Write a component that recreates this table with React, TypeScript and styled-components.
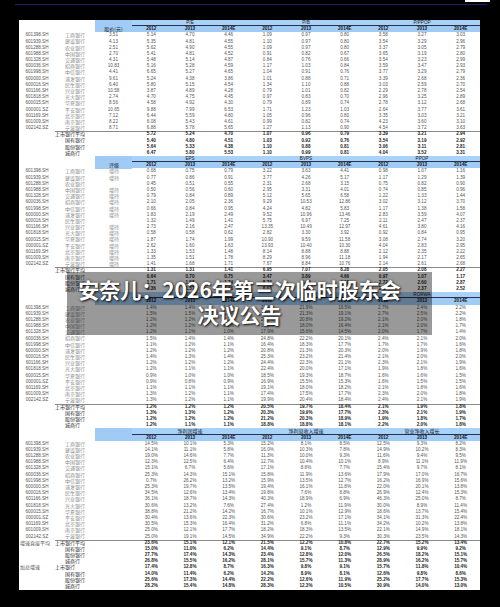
import React from 'react';
import styled, { createGlobalStyle } from 'styled-components';

const GlobalStyle = createGlobalStyle`
  html, body { margin: 0; padding: 0; background: #000; }
  body { font-family: "Liberation Sans", Arial, sans-serif; }
`;

type StockRow = { code: string; name: string; extra: string; vals: string[] };
type AvgRow = { pre?: string; label: string; indent: boolean; vals: string[] };
type Section = { priceLabel: string; groups: string[]; rows: StockRow[]; avgs: AvgRow[]; cnGroups?: boolean };

const codes = [
  ['601398.SH', '工商银行'], ['601939.SH', '建设银行'], ['601288.SH', '农业银行'], ['601988.SH', '中国银行'],
  ['601328.SH', '交通银行'], ['600036.SH', '招商银行'], ['601998.SH', '中信银行'], ['600000.SH', '浦发银行'],
  ['600016.SH', '民生银行'], ['601166.SH', '兴业银行'], ['601818.SH', '光大银行'], ['600015.SH', '华夏银行'],
  ['000001.SZ', '平安银行'], ['601169.SH', '北京银行'], ['601009.SH', '南京银行'], ['002142.SZ', '宁波银行'],
];

const mk = (extras: string[], data: string[]): StockRow[] =>
  codes.map((c, i) => ({ code: c[0], name: c[1], extra: extras[i], vals: data[i].split(' ') }));

const prices = ['3.51', '4.13', '2.51', '2.70', '4.31', '10.83', '4.41', '9.61', '6.40', '10.58', '2.74', '8.56', '10.65', '7.12', '8.22', '8.71'];
const ratings = ['增持', '增持', '', '增持', '增持', '增持', '增持', '增持', '', '增持', '增持', '增持', '增持', '增持', '增持', '增持'];
const blanks = codes.map(() => '');

const s1 = mk(prices, [
  '5.14 4.70 4.46 1.09 0.97 0.80 3.58 3.27 3.03',
  '5.35 4.81 4.55 1.10 0.97 0.80 3.54 3.29 2.96',
  '5.62 4.90 4.55 1.09 0.97 0.80 3.37 3.05 2.79',
  '5.41 4.81 4.52 0.91 0.82 0.67 3.65 3.19 2.80',
  '5.48 5.14 4.87 0.84 0.76 0.66 3.54 3.23 2.99',
  '5.16 5.28 4.59 1.17 1.03 0.84 3.59 3.47 2.93',
  '6.65 5.27 4.65 1.04 0.91 0.76 3.77 3.29 2.79',
  '5.24 4.38 3.86 1.01 0.88 0.71 3.39 2.68 2.36',
  '5.80 5.15 4.54 1.34 1.10 0.88 3.03 2.59 2.70',
  '3.87 4.89 4.28 0.79 1.01 0.82 2.29 2.78 2.54',
  '4.70 4.75 4.45 0.97 0.83 0.70 2.96 3.25 2.89',
  '4.58 4.92 4.30 0.79 0.89 0.74 2.78 3.12 2.68',
  '9.88 7.99 6.53 1.71 1.23 1.03 2.64 3.77 3.61',
  '6.44 5.59 4.80 1.05 0.96 0.80 3.35 3.03 3.21',
  '6.08 5.43 4.61 0.99 0.82 0.74 4.23 3.60 3.10',
  '6.88 5.78 5.65 1.27 1.13 0.90 4.54 3.72 3.63',
]);

const s2 = mk(ratings, [
  '0.68 0.75 0.79 3.22 3.63 4.41 0.98 1.07 1.16',
  '0.77 0.86 0.91 3.77 4.26 5.17 1.17 1.29 1.39',
  '0.45 0.51 0.55 2.31 2.68 3.15 0.75 0.82 0.90',
  '0.50 0.56 0.60 2.95 3.31 4.01 0.74 0.85 0.96',
  '0.79 0.84 0.89 5.12 5.65 6.58 1.22 1.33 1.44',
  '2.10 2.05 2.36 9.29 10.53 12.86 3.02 3.12 3.70',
  '0.66 0.84 0.95 4.24 4.82 5.83 1.17 1.38 1.58',
  '1.83 2.19 2.49 9.52 10.96 13.46 2.83 3.59 4.07',
  '1.32 1.49 1.41 5.75 6.97 7.25 2.11 2.47 2.37',
  '2.73 2.16 2.47 13.35 10.49 12.97 4.61 3.80 4.16',
  '0.58 0.58 0.62 2.82 3.30 3.92 0.92 0.84 0.95',
  '1.87 1.74 1.99 10.90 9.59 11.58 3.08 2.74 3.20',
  '2.62 1.60 1.63 13.93 10.40 10.30 4.04 2.83 2.95',
  '1.33 1.53 1.48 8.14 8.88 8.88 2.12 2.35 2.22',
  '1.35 1.51 1.78 8.29 8.96 11.18 1.94 2.17 2.65',
  '1.41 1.68 1.71 7.67 8.84 10.76 2.14 2.61 2.68',
]);

const s3 = mk(blanks, [
  '1.4% 1.4% 1.4% 23.4% 21.9% 19.5% 2.7% 2.4% 2.2%',
  '1.5% 1.5% 1.4% 22.0% 21.3% 19.1% 2.7% 2.5% 2.2%',
  '1.2% 1.2% 1.2% 20.7% 20.8% 19.2% 2.1% 2.0% 1.8%',
  '1.2% 1.2% 1.2% 18.0% 18.0% 16.4% 2.1% 2.0% 1.7%',
  '1.2% 1.1% 1.0% 17.9% 15.6% 14.5% 2.0% 1.7% 1.4%',
  '1.5% 1.4% 1.4% 24.8% 22.2% 20.1% 2.4% 2.1% 2.0%',
  '1.1% 1.2% 1.1% 16.4% 18.3% 17.7% 1.7% 1.7% 1.6%',
  '1.2% 1.2% 1.2% 20.8% 21.3% 20.3% 2.0% 1.9% 1.8%',
  '1.4% 1.3% 1.4% 25.3% 23.2% 21.4% 2.1% 2.0% 2.0%',
  '1.2% 1.2% 1.2% 24.4% 22.3% 21.1% 2.3% 2.1% 1.9%',
  '1.2% 1.1% 1.1% 22.4% 20.0% 17.1% 1.9% 1.8% 1.6%',
  '0.9% 1.0% 1.0% 18.5% 19.3% 18.7% 1.6% 1.6% 1.5%',
  '0.9% 0.8% 0.9% 16.9% 15.5% 15.3% 1.6% 1.5% 1.5%',
  '1.1% 1.1% 1.1% 19.1% 18.0% 18.2% 2.1% 1.8% 1.6%',
  '1.3% 1.2% 1.1% 17.4% 17.5% 17.7% 2.3% 2.0% 1.8%',
  '1.3% 1.2% 1.1% 19.9% 20.4% 18.4% 2.4% 2.1% 1.9%',
]);

const s4 = mk(blanks, [
  '14.5% 10.1% 5.3% 15.2% 8.1% 8.5% 12.5% 9.3% 8.2%',
  '14.1% 11.1% 5.8% 16.0% 10.3% 7.8% 14.9% 10.2% 8.3%',
  '19.0% 14.6% 7.7% 11.3% 10.0% 9.3% 11.6% 9.4% 9.5%',
  '12.3% 12.5% 6.4% 12.7% 10.4% 10.1% 8.9% 11.1% 11.9%',
  '15.1% 6.7% 5.6% 17.1% 8.8% 7.7% 15.4% 9.7% 8.1%',
  '25.3% 14.3% 15.1% 15.8% 11.9% 13.6% 17.9% 17.0% 16.7%',
  '0.7% 26.2% 13.2% 15.9% 13.5% 12.7% 16.2% 16.9% 15.6%',
  '25.3% 19.7% 13.5% 19.4% 16.1% 11.8% 22.0% 20.1% 13.8%',
  '34.5% 12.6% 13.4% 19.8% 7.6% 8.8% 26.9% 12.4% 15.3%',
  '36.1% 18.7% 14.3% 40.3% 18.9% 6.9% 46.3% 25.0% 8.7%',
  '30.6% 13.2% 7.6% 27.4% 1.2% 11.9% 30.0% 8.9% 11.4%',
  '38.8% 21.2% 14.2% 16.7% 10.1% 12.9% 18.6% 13.7% 15.4%',
  '30.4% 13.6% 22.3% 30.6% 23.2% 17.1% 34.1% 31.3% 22.4%',
  '30.5% 15.3% 16.4% 31.2% 6.8% 11.1% 34.2% 10.2% 13.8%',
  '25.0% 12.1% 17.7% 18.2% 18.3% 13.5% 22.1% 14.9% 18.1%',
  '25.0% 19.1% 14.5% 34.9% 22.2% 9.3% 30.3% 23.5% 14.3%',
]);

const av = (label: string, indent: boolean, v: string, pre?: string): AvgRow => ({ label, indent, vals: v.split(' '), pre });

const sections: Section[] = [
  {
    priceLabel: '股价(元)', groups: ['P/E', 'P/B', 'P/PPOP'], rows: s1,
    avgs: [
      av('上市银行平均', false, '5.72 5.24 4.70 1.07 0.96 0.79 3.39 3.21 2.94'),
      av('国有银行', true, '5.40 4.80 4.51 1.03 0.92 0.76 3.54 3.19 2.92'),
      av('股份银行', true, '5.64 5.33 4.38 1.10 0.88 0.81 3.06 3.11 2.81'),
      av('城商行', true, '6.47 5.80 5.53 1.10 0.99 0.81 4.04 3.52 3.31'),
    ],
  },
  {
    priceLabel: '评级', groups: ['EPS', 'BVPS', 'PPOP'], rows: s2,
    avgs: [
      av('上市银行平均', false, '1.31 1.31 1.41 6.95 7.07 8.28 2.05 2.08 2.27'),
      av('国有银行', true, '0.64 0.70 0.75 3.47 3.89 4.66 0.97 1.07 1.17'),
      av('股份银行', true, '1.71 1.58 1.74 8.74 8.64 9.98 2.72 2.60 2.87'),
      av('城商行', true, '1.36 1.57 1.66 8.03 8.89 10.27 2.07 2.37 2.52'),
    ],
  },
  {
    priceLabel: '', groups: ['ROAA', 'ROAE', 'RORWA'], rows: s3,
    avgs: [
      av('上市银行平均', false, '1.2% 1.2% 1.2% 20.5% 19.7% 18.4% 2.1% 1.9% 1.8%'),
      av('国有银行', true, '1.3% 1.3% 1.2% 20.3% 19.9% 17.7% 2.3% 2.1% 1.9%'),
      av('股份银行', true, '1.2% 1.2% 1.2% 21.2% 20.3% 18.9% 1.9% 1.8% 1.7%'),
      av('城商行', true, '1.2% 1.1% 1.1% 18.8% 18.8% 18.1% 2.2% 2.0% 1.8%'),
    ],
  },
  {
    priceLabel: '', groups: ['净利润增速', '净利息收入增速', '营业净收入增长'], rows: s4, cnGroups: true,
    avgs: [
      av('上市银行平均', false, '23.6% 15.1% 12.1% 21.5% 12.2% 10.8% 22.7% 15.2% 13.4%', '增速直接平均'),
      av('国有银行', true, '15.0% 11.0% 6.2% 14.4% 9.1% 8.7% 12.9% 9.9% 9.2%'),
      av('股份银行', true, '27.7% 17.4% 14.3% 23.4% 12.8% 12.0% 26.5% 18.2% 15.1%'),
      av('城商行', true, '26.8% 15.5% 16.2% 28.1% 15.7% 11.3% 28.9% 16.2% 15.7%'),
      av('上市银行', false, '17.4% 12.8% 8.7% 16.3% 9.8% 9.1% 15.7% 11.8% 10.4%', '加总增速'),
      av('国有银行', true, '14.0% 11.4% 6.2% 14.2% 8.9% 8.1% 12.6% 9.8% 8.6%'),
      av('股份银行', true, '25.6% 17.3% 14.4% 22.2% 12.6% 11.9% 25.2% 17.7% 15.3%'),
      av('城商行', true, '28.2% 15.4% 14.8% 28.3% 12.3% 10.5% 30.9% 14.0% 13.0%'),
    ],
  },
];

const years = ['2012', '2013', '2014E'];
const ROW = 6.2;
const COLS = '36px 40px 37px repeat(9, 1fr)';
const BLUE = '#9fcbf4';

const Page = styled.div`
  position: relative;
  width: 500px;
  height: 607px;
  overflow: hidden;
  background: #000;
`;

const TopBox = styled.div`
  width: 25px;
  height: 2.3px;
  margin-left: 465px;
  background: #fff;
`;

const TopLine = styled.div`
  width: 472px;
  height: 1.5px;
  margin: 1.7px 0 0 15px;
  background: #26196e;
`;

const Sheet = styled.div`
  width: 461px;
  height: 570.4px;
  margin: 14.5px 0 0 19px;
  background: #fff;
  color: #555;
  font-size: 4.6px;
  line-height: ${ROW}px;
`;

/* Chinese text drawn at double size and scaled down */
const Cn = styled.span<{ $bold?: boolean; $origin?: string; $color?: string }>`
  display: inline-block;
  font-family: "Noto Sans CJK SC", sans-serif;
  font-size: 10px;
  line-height: 12.4px;
  font-weight: ${(p) => (p.$bold ? 700 : 400)};
  color: ${(p) => p.$color ?? 'inherit'};
  white-space: nowrap;
  transform: scale(0.5);
  transform-origin: ${(p) => p.$origin ?? 'left center'};
  vertical-align: top;
  margin-top: -3.1px;
`;

const Head = styled.div`
  display: grid;
  grid-template-columns: ${COLS};
  grid-template-rows: ${ROW}px ${ROW}px;
  color: #1a1a1a;
`;

const HeadBlank = styled.div`
  grid-column: 1 / 3;
  grid-row: 1 / 3;
`;

const PriceHead = styled.div`
  grid-column: 3;
  grid-row: 1 / 3;
  background: ${BLUE};
  display: flex;
  align-items: flex-end;
  justify-content: center;
  height: ${ROW * 2}px;
`;

const PriceLabel = styled.div`
  height: ${ROW}px;
  text-align: center;
`;

const GroupHead = styled.div`
  grid-column: span 3;
  grid-row: 1;
  background: #a9d2f8;
  border-bottom: 1px solid #2c3050;
  box-sizing: border-box;
  text-align: center;
  line-height: ${ROW - 1}px;
  height: ${ROW}px;
`;

const YearHead = styled.div`
  grid-row: 2;
  background: ${BLUE};
  text-align: center;
  font-weight: 700;
`;

const Row = styled.div<{ $sep?: boolean; $bold?: boolean }>`
  display: grid;
  grid-template-columns: ${COLS};
  height: ${ROW}px;
  font-weight: ${(p) => (p.$bold ? 700 : 400)};
  color: ${(p) => (p.$bold ? '#1e1e1e' : '#555')};
  background: ${(p) => (p.$sep ? 'linear-gradient(#8a8a8a, #8a8a8a) right top / calc(100% - 36px) 1px no-repeat' : 'none')};
`;

const Code = styled.div`
  text-align: center;
  white-space: nowrap;
`;

const Pre = styled.div`
  padding-left: 1px;
  white-space: nowrap;
`;

const Name = styled.div<{ $indent?: boolean }>`
  padding-left: ${(p) => (p.$indent ? '10px' : '0')};
  white-space: nowrap;
`;

const Extra = styled.div`
  text-align: center;
  white-space: nowrap;
`;

const Val = styled.div`
  text-align: center;
  white-space: nowrap;
`;

const Overlay = styled.div`
  position: absolute;
  left: 67px;
  top: 272px;
  width: 365px;
  height: 63px;
  background: rgba(0, 0, 0, 0.4);
`;

const Title = styled.div`
  padding: 5px 20px 0 0;
  text-align: center;
  color: #fff;
  font-family: "Noto Sans CJK SC", sans-serif;
  font-weight: 700;
  font-size: 21px;
  line-height: 25px;
  text-shadow: 1px 1px 2px rgba(0, 0, 0, 0.85), 0 0 3px rgba(0, 0, 0, 0.5);
`;

const TitleLine = styled.div`
  white-space: nowrap;
`;

function SectionBlock({ s }: { s: Section }) {
  return (
    <>
      <Head>
        <HeadBlank />
        <PriceHead>
          <PriceLabel>
            {s.priceLabel && <Cn $origin="center center">{s.priceLabel}</Cn>}
          </PriceLabel>
        </PriceHead>
        {s.groups.map((g) => (
          <GroupHead key={g}>
            {s.cnGroups ? <Cn $origin="center center">{g}</Cn> : g}
          </GroupHead>
        ))}
        {s.groups.map((g) =>
          years.map((y) => <YearHead key={g + y}>{y}</YearHead>)
        )}
      </Head>
      {s.rows.map((r) => (
        <Row key={r.code}>
          <Code>{r.code}</Code>
          <Name $indent>
            <Cn $color="#8a8a8a">{r.name}</Cn>
          </Name>
          <Extra>
            {s.priceLabel === '评级' ? (r.extra && <Cn $color="#8a8a8a" $origin="center center">{r.extra}</Cn>) : r.extra}
          </Extra>
          {r.vals.map((v, i) => (
            <Val key={i}>{v}</Val>
          ))}
        </Row>
      ))}
      {s.avgs.map((a, i) => (
        <Row key={i} $sep={i === 0} $bold>
          <Pre>{a.pre && <Cn $color="#555">{a.pre}</Cn>}</Pre>
          <Name $indent={a.indent}>
            <Cn $color="#2a2a2a">{a.label}</Cn>
          </Name>
          <Extra />
          {a.vals.map((v, j) => (
            <Val key={j}>{v}</Val>
          ))}
        </Row>
      ))}
    </>
  );
}

export default function App() {
  return (
    <Page>
      <GlobalStyle />
      <TopBox />
      <TopLine />
      <Sheet>
        {sections.map((s, i) => (
          <SectionBlock key={i} s={s} />
        ))}
      </Sheet>
      <Overlay>
        <Title>
          <TitleLine>安奈儿：2026年第三次临时股东会</TitleLine>
          <TitleLine>决议公告</TitleLine>
        </Title>
      </Overlay>
    </Page>
  );
}
